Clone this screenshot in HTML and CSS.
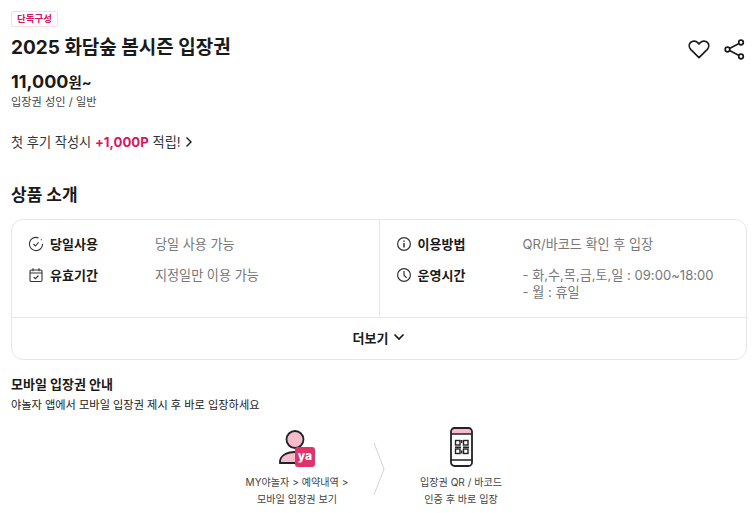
FILE: index.html
```html
<!DOCTYPE html>
<html>
<head>
    <meta charset="UTF-8">
    <meta name="viewport" content="width=device-width, initial-scale=1.0">
    <title>2025 화담숲 봄시즌 입장권</title>
    <link rel="stylesheet" href="styles.css">
</head>
<body>
    <div class="page">
        <span class="tag">단독구성</span>
        <div class="title-row">
            <h1>2025 화담숲 봄시즌 입장권</h1>
            <div class="title-icons">
                <svg width="24" height="24" viewBox="0 0 24 24" fill="none" stroke="#1a1a1a" stroke-width="1.7" stroke-linejoin="round"><path d="M12 20.6 3.900 12.600C1.700 10.300 1.800 7.200 3.600 5.400 5.600 3.500 8.800 3.600 10.700 5.600L12 7l1.300-1.400c1.900-2 5.100-2.100 7.100-.2 1.800 1.800 1.900 4.900-.3 7.200z"/></svg>
                <svg width="24" height="24" viewBox="0 0 24 24" fill="none" stroke="#1a1a1a" stroke-width="1.7"><circle cx="19" cy="5.500" r="2.300"/><circle cx="5.500" cy="12.500" r="2.300"/><circle cx="19" cy="19.500" r="2.300"/><path d="M17 6.600 7.500 11.400M7.500 13.600 17 18.400"/></svg>
            </div>
        </div>
        <div class="price">11,000<span class="won">원~</span></div>
        <div class="price-sub">입장권 성인 / 일반</div>
        <div class="review">
            <span>첫 후기 작성시 <b>+1,000P</b> 적립!</span>
            <svg width="10" height="12" viewBox="0 0 10 12" fill="none" stroke="#1a1a1a" stroke-width="1.4"><path d="M2.500 1.500 7 6 2.500 10.500"/></svg>
        </div>

        <h2>상품 소개</h2>
        <div class="card">
            <div class="card-body">
                <div class="card-col">
                    <div class="info-row">
                        <svg class="info-icon" width="16" height="16" viewBox="0 0 16 16" fill="none" stroke="#333" stroke-width="1.1"><path d="M14.600 8A6.600 6.600 0 1 1 10.500 1.900"/><path d="M13 3.400 13.600 4.200"/><path d="M5.500 8 7.400 10l3.200-3.600"/></svg>
                        <span class="info-label">당일사용</span>
                        <span class="info-text">당일 사용 가능</span>
                    </div>
                    <div class="info-row">
                        <svg class="info-icon" width="16" height="16" viewBox="0 0 16 16" fill="none" stroke="#333" stroke-width="1.1"><rect x="2" y="3" width="12" height="11.500" rx="1.200"/><path d="M2 6h12M5 1.200v3M11 1.200v3M5.600 10l1.800 1.700 3-3.200"/></svg>
                        <span class="info-label">유효기간</span>
                        <span class="info-text">지정일만 이용 가능</span>
                    </div>
                </div>
                <div class="card-col">
                    <div class="info-row">
                        <svg class="info-icon" width="16" height="16" viewBox="0 0 16 16" fill="none" stroke="#333" stroke-width="1.2"><circle cx="8" cy="8" r="6.400"/><path d="M8 7v4.400" stroke-width="1.500"/><path d="M8 4.400v1.400" stroke-width="1.500"/></svg>
                        <span class="info-label">이용방법</span>
                        <span class="info-text">QR/바코드 확인 후 입장</span>
                    </div>
                    <div class="info-row">
                        <svg class="info-icon" width="16" height="16" viewBox="0 0 16 16" fill="none" stroke="#333" stroke-width="1.2"><circle cx="8" cy="8" r="6.400"/><path d="M8 4v4.200l2.600 2.600"/></svg>
                        <span class="info-label">운영시간</span>
                        <span class="info-text">- 화,수,목,금,토,일 : 09:00~18:00<br>- 월 : 휴일</span>
                    </div>
                </div>
            </div>
            <div class="card-more">더보기
                <svg width="12" height="8" viewBox="0 0 12 8" fill="none" stroke="#1a1a1a" stroke-width="1.7"><path d="M1.500 1.500 6 6l4.500-4.500"/></svg>
            </div>
        </div>

        <h3>모바일 입장권 안내</h3>
        <p class="guide-desc">야놀자 앱에서 모바일 입장권 제시 후 바로 입장하세요</p>
        <div class="steps">
            <div class="step">
                <div class="step-icon user-icon">
                    <svg width="30" height="36" viewBox="0 0 30 36" fill="none" stroke="#222" stroke-width="1.800"><circle cx="16" cy="9.500" r="8.500" fill="#f7bccb"/><path d="M1 33v-1c0-6 6-10 15-10s14 4 14 10v1z" fill="#f7bccb"/></svg>
                    <span class="ya-badge">ya</span>
                </div>
                <div class="step-text">MY야놀자 &gt; 예약내역 &gt;<br>모바일 입장권 보기</div>
            </div>
            <svg class="step-arrow" width="12" height="54" viewBox="0 0 12 54" fill="none" stroke="#d4d4d4" stroke-width="1"><path d="M1 1 11 27 1 53"/></svg>
            <div class="step">
                <div class="step-icon">
                    <svg width="23" height="40" viewBox="0 0 23 40" fill="none" stroke="#222">
                        <rect x="2" y="2" width="19" height="5" fill="#f7bccb" stroke="none"/>
                        <rect x="1" y="1" width="21" height="38" rx="3.500" stroke-width="1.800"/>
                        <path d="M1 7h21M1 33h21" stroke-width="1.500"/>
                        <g stroke-width="1.400">
                            <rect x="5.500" y="13.500" width="4.500" height="4.500"/><rect x="13.500" y="13.500" width="4.500" height="4.500"/>
                            <rect x="5.500" y="22" width="4.500" height="4.500"/><rect x="13.500" y="22" width="4.500" height="4.500"/>
                            <path d="M5 20.200h6M13 20.200h6M11.700 13v3M11.700 23.500v3"/>
                        </g>
                    </svg>
                </div>
                <div class="step-text">입장권 QR / 바코드<br>인증 후 바로 입장</div>
            </div>
        </div>
    </div>
</body>
</html>
```

FILE: styles.css
```css
body {
    margin: 0;
    background-color: #fff;
    color: #1a1a1a;
    font-family: Inter, "Noto Sans CJK KR", sans-serif;
}

.page {
    padding: 11px 5px 0 11px;
}

.tag {
    display: block;
    width: fit-content;
    height: 16px;
    line-height: 14px;
    padding: 0 5px;
    box-sizing: border-box;
    border: 1px solid #fadbe5;
    border-radius: 2px;
    color: #d6175f;
    font-size: 9.500px;
    font-weight: 700;
}

.title-row {
    display: flex;
    justify-content: space-between;
    align-items: flex-start;
    height: 32px;
    margin-top: 5px;
}

h1 {
    margin: 0;
    font-size: 19px;
    line-height: 32px;
    font-weight: 700;
}

.title-icons {
    display: flex;
    gap: 11px;
    margin-top: 5px;
    margin-right: 1px;
}

.price {
    margin-top: 6px;
    font-size: 18px;
    line-height: 24px;
    font-weight: 700;
}

.won {
    font-size: 14.500px;
}

.price-sub {
    margin-top: -1px;
    font-size: 11.200px;
    line-height: 16px;
    color: #444;
}

.review {
    display: flex;
    align-items: center;
    gap: 3px;
    margin-top: 22px;
    font-size: 13.200px;
    line-height: 20px;
    color: #333;
}

.review b {
    color: #d6175f;
    font-weight: 700;
}

h2 {
    margin: 31px 0 0;
    font-size: 17px;
    line-height: 24px;
    font-weight: 700;
}

.card {
    margin-top: 12px;
    border: 1px solid #e6e6e6;
    border-radius: 12px;
}

.card-body {
    display: flex;
    height: 97px;
}

.card-col {
    flex: 1;
    padding: 15px 16px 0;
}

.card-col:first-child {
    border-right: 1px solid #e6e6e6;
}

.info-row {
    display: flex;
    align-items: flex-start;
    margin-bottom: 13px;
    font-size: 14px;
    line-height: 18px;
}

.info-icon {
    flex: none;
    margin: 1px 6px 0 0;
}

.info-label {
    width: 105px;
    flex: none;
    font-weight: 700;
    font-size: 13px;
}

.info-text {
    padding-top: 1px;
    color: #777;
    font-size: 13.100px;
    line-height: 17px;
}

.card-more {
    display: flex;
    justify-content: center;
    align-items: center;
    gap: 5px;
    height: 42px;
    padding-bottom: 3px;
    box-sizing: border-box;
    border-top: 1px solid #e6e6e6;
    font-size: 13px;
    font-weight: 700;
}

h3 {
    margin: 15px 0 0;
    font-size: 13px;
    line-height: 18px;
    font-weight: 700;
}

.guide-desc {
    margin: 4px 0 0;
    font-size: 11.200px;
    line-height: 16px;
}

.steps {
    display: flex;
    justify-content: center;
    align-items: flex-start;
    gap: 21px;
    margin-top: 14px;
}

.step {
    width: 110px;
    display: flex;
    flex-direction: column;
    align-items: center;
}

.step-icon {
    position: relative;
    height: 40px;
}

.user-icon {
    width: 36px;
    height: 37px;
    margin-top: 3px;
}

.ya-badge {
    position: absolute;
    right: 0;
    bottom: 0;
    width: 20px;
    height: 20px;
    border-radius: 3px;
    background: #e0336b;
    color: #fff;
    font-size: 12px;
    font-weight: 800;
    line-height: 18px;
    text-align: center;
}

.step-text {
    margin-top: 7px;
    font-size: 10.100px;
    line-height: 17px;
    text-align: center;
    color: #444;
    white-space: nowrap;
}

.step-arrow {
    margin-top: 15px;
}
```
